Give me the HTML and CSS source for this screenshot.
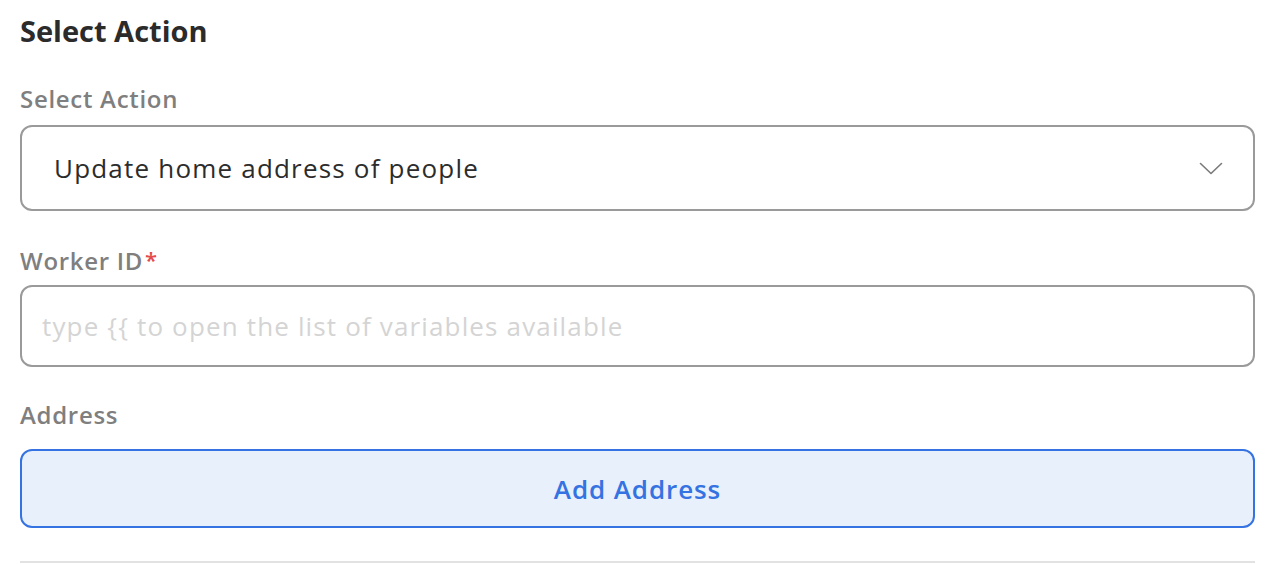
FILE: index.html
```html
<!DOCTYPE html>
<html lang="en">
<head>
<meta charset="utf-8">
<title>Select Action</title>
<link rel="stylesheet" href="styles.css">
</head>
<body>
<main class="panel">
  <h2 class="title">Select Action</h2>

  <div class="field">
    <label class="label">Select Action</label>
    <div class="select">
      <span class="select-value">Update home address of people</span>
      <svg class="chevron" width="24" height="13" viewBox="0 0 24 13" aria-hidden="true">
        <path d="M1.5 1.5 L12 11.5 L22.5 1.5" fill="none" stroke="#7a7a7a" stroke-width="1.6" stroke-linecap="round" stroke-linejoin="round"/>
      </svg>
    </div>
  </div>

  <div class="field">
    <label class="label">Worker ID<span class="req">*</span></label>
    <div class="input">
      <span class="placeholder">type {{ to open the list of variables available</span>
    </div>
  </div>

  <div class="field">
    <label class="label">Address</label>
    <button class="add-btn" type="button">Add Address</button>
  </div>

  <hr class="divider">
</main>
</body>
</html>
```

FILE: styles.css
```css
* { box-sizing: border-box; }

html, body {
  margin: 0;
  padding: 0;
  background: #ffffff;
}

body {
  font-family: "Open Sans", "Noto Sans", sans-serif;
}

.panel {
  width: 1255px;
  padding: 11px 0 0 20px;
  display: flex;
  flex-direction: column;
}

.title {
  margin: 0;
  height: 40px;
  line-height: 40px;
  font-size: 29px;
  font-weight: 700;
  color: #2b2b2b;
}

.field {
  display: flex;
  flex-direction: column;
  gap: 10px;
  margin-top: 34px;
}

.label {
  height: 30px;
  line-height: 28px;
  font-size: 24px;
  font-weight: 600;
  letter-spacing: 0.7px;
  color: #7f7f7f;
}

.req {
  color: #e54b4b;
  margin-left: 2px;
  font-size: 22px;
  vertical-align: 2px;
}

.select {
  height: 86px;
  border: 2px solid #9a9a9a;
  border-radius: 12px;
  display: flex;
  align-items: center;
  justify-content: space-between;
  padding: 0 30px 0 32px;
}

.select-value {
  font-size: 26px;
  font-weight: 500;
  letter-spacing: 1.2px;
  color: #2c2c2c;
}

.chevron {
  display: block;
}

.input {
  height: 82px;
  border: 2px solid #9a9a9a;
  border-radius: 12px;
  display: flex;
  align-items: center;
  padding: 0 20px;
}

.placeholder {
  font-size: 26px;
  letter-spacing: 1.15px;
  color: #d4d4d4;
}

.add-btn {
  margin-top: 8px;
  height: 79px;
  border: 2px solid #3572e2;
  border-radius: 12px;
  background: #e8f0fb;
  color: #3572e2;
  font-family: inherit;
  font-size: 26px;
  font-weight: 600;
  letter-spacing: 0.9px;
  cursor: pointer;
}

.divider {
  margin: 33px 0 0 0;
  border: 0;
  height: 2px;
  background: #e2e2e2;
}
```
